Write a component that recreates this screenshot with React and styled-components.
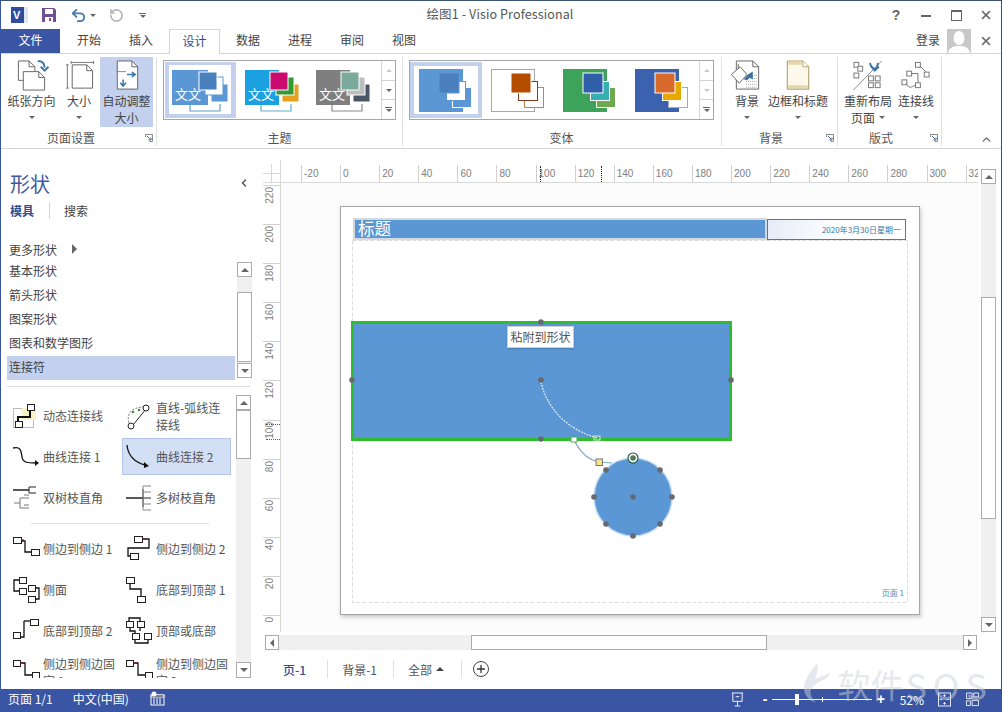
import React from 'react';
import styled, { createGlobalStyle } from 'styled-components';
import { Undo2, RotateCcw, ChevronLeft, ChevronUp, X, Plus } from 'lucide-react';

const BLUE = '#3955a3';
const FONT = '"Noto Sans CJK SC", "Liberation Sans", sans-serif';

const Global = createGlobalStyle`
  html, body { margin: 0; padding: 0; background: #fff; overflow: hidden; }
  * { box-sizing: border-box; }
  #root { width: 1002px; height: 712px; }
`;

const Frame = styled.div`
  position: relative; width: 1002px; height: 712px; display: flex; flex-direction: column;
  border-left: 1px solid ${BLUE}; border-right: 1px solid #34527c; border-top: 1px solid #3d5470;
  font: 12px/17px ${FONT}; color: #444; background: #fff; overflow: hidden;
`;

/* title bar */
const TitleBar = styled.header`
  height: 28px; display: grid; grid-template-columns: 1fr auto 1fr; align-items: center; flex: none;
`;
const Qat = styled.div`display: flex; align-items: center; padding-left: 10px;`;
const QatSlot = styled.span`display: flex; align-items: center; margin-left: ${p => p.$ml || 0}px;`;
const VisioBadge = styled.span`
  position: relative; width: 17px; height: 16px; background: #2f4d9c; color: #fff;
  font: bold 11px/16px "Liberation Sans", sans-serif; padding-left: 2px; display: block;
  border-right: 4px solid #dfe6f3;
`;
const DocTitle = styled.div`font-size: 12.5px; color: #555; letter-spacing: .12px; padding: 0 2px 4px 0;`;
const WinButtons = styled.div`display: flex; justify-content: flex-end; align-items: center; color: #666;`;
const WinBtn = styled.span`width: 30px; height: 22px; display: flex; align-items: center; justify-content: center; font: bold 14px "Liberation Sans", sans-serif;`;

/* tabs */
const TabRow = styled.nav`
  height: 25px; flex: none; display: flex; align-items: stretch; border-bottom: 1px solid #d4d4d4;
`;
const FileTab = styled.div`
  width: 59px; height: 24px; margin-right: 3px; background: ${BLUE}; color: #fff; padding-bottom: 4px;
  display: flex; align-items: center; justify-content: center;
`;
const Tab = styled.div`
  width: ${p => (p.$active ? 51 : 52)}px; height: ${p => (p.$active ? 25 : 24)}px; margin: 0 ${p => (p.$active ? 2 : 0)}px;
  display: flex; align-items: center; justify-content: center; color: ${p => (p.$active ? BLUE : '#444')}; padding-bottom: 4px;
  background: #fff; ${p => p.$active && 'border: 1px solid #d4d4d4; border-bottom: 0; color: #2f4d8f;'}
`;
const SignIn = styled.div`margin-left: auto; display: flex; align-items: center; color: #444;`;
const SignText = styled.span`padding-bottom: 4px;`;
const Avatar = styled.span`width: 24px; height: 24px; margin-left: 7px; background: #c8c8c8; display: block; overflow: hidden;`;
const RibbonClose = styled.span`width: 30px; display: flex; justify-content: center; color: #666;`;

/* ribbon */
const Ribbon = styled.section`
  height: 95px; flex: none; display: flex; padding-top: 3px; border-bottom: 1px solid #d4d4d4; position: relative;
`;
const Group = styled.div`
  width: ${p => p.$w}px; height: 89px; display: flex; flex-direction: column; border-right: 1px solid #e1e1e1; flex: none;
`;
const GroupBody = styled.div`flex: 1; display: flex; padding: ${p => p.$pad || '0 0 0 4px'};`;
const GroupFooter = styled.div`
  height: 17px; display: grid; grid-template-columns: 1fr auto 1fr; align-items: center; color: #555; padding-right: 3px;
`;
const FooterLabel = styled.span`margin: 0 ${p => p.$mr || 0}px 0 ${p => p.$ml || 0}px;`;
const Launcher = styled.svg`justify-self: end; width: 8px; height: 8px;`;
const RibbonBtn = styled.div`
  width: ${p => p.$w}px; height: 70px; padding-top: 3px; display: flex; flex-direction: column; align-items: center;
  background: ${p => (p.$on ? '#c3d0ee' : 'transparent')}; white-space: nowrap; flex: none;
`;
const BtnIcon = styled.svg`width: 36px; height: 32px; flex: none;`;
const BtnLine = styled.div`height: 17px; display: flex; align-items: center; gap: 4px;`;
const Caret = styled.i`
  display: block; width: 0; height: 0; border-left: 3px solid transparent; border-right: 3px solid transparent;
  border-top: 3px solid #666;
`;
const Gallery = styled.div`
  height: 60px; margin-top: 3px; border: 1px solid #a6a6a6; display: flex; width: ${p => p.$w}px;
`;
const GalleryItems = styled.div`flex: 1; display: flex; padding: 1px 0 1px ${p => p.$pl || 0}px;`;
const GalleryCell = styled.div`
  width: ${p => p.$w}px; height: 56px; background: ${p => (p.$on ? '#c3d0ee' : 'transparent')}; flex: none;
`;
const GallerySvg = styled.svg`display: block;`;
const GalleryScroll = styled.div`
  width: 14px; margin-left: auto; border-left: 1px solid #d4d4d4; display: flex; flex-direction: column; flex: none;
`;
const GalleryBtn = styled.div`
  flex: 1; display: flex; align-items: center; justify-content: center; border-bottom: ${p => (p.$last ? 0 : '1px solid #d4d4d4')};
`;
const Tri = styled.i`
  display: block; width: 0; height: 0;
  ${p => p.$dir === 'up' && `border-left:${p.$s || 4}px solid transparent;border-right:${p.$s || 4}px solid transparent;border-bottom:${p.$s || 4}px solid ${p.$c || '#666'};`}
  ${p => p.$dir === 'down' && `border-left:${p.$s || 4}px solid transparent;border-right:${p.$s || 4}px solid transparent;border-top:${p.$s || 4}px solid ${p.$c || '#666'};`}
  ${p => p.$dir === 'left' && `border-top:${p.$s || 4}px solid transparent;border-bottom:${p.$s || 4}px solid transparent;border-right:${p.$s || 4}px solid ${p.$c || '#666'};`}
  ${p => p.$dir === 'right' && `border-top:${p.$s || 4}px solid transparent;border-bottom:${p.$s || 4}px solid transparent;border-left:${p.$s || 4}px solid ${p.$c || '#666'};`}
`;
const MoreIcon = styled.span`
  display: flex; flex-direction: column; align-items: center; gap: 1px;
  &::before { content: ''; width: 7px; height: 1px; background: #666; }
`;
const Collapse = styled.span`position: absolute; right: 8px; bottom: 2px; color: #666; display: flex;`;

/* main */
const Main = styled.main`flex: 1; display: flex; min-height: 0;`;
const Sidebar = styled.aside`width: 249px; flex: none; display: flex; flex-direction: column; padding-top: 21px;`;
const SideHead = styled.div`display: flex; justify-content: space-between; align-items: center; padding: 0 0 0 9px; height: 28px;`;
const SideTitle = styled.h2`margin: 0; font: 400 20px/28px ${FONT}; color: #3f5a9e;`;
const SideChevron = styled.span`display: flex; margin-top: -3px; color: #555;`;
const SideTabs = styled.div`display: flex; align-items: center; height: 18px; margin: 3px 0 0 9px;`;
const SideTab = styled.span`color: ${p => (p.$on ? '#2f4d8f' : '#444')}; font-weight: ${p => (p.$on ? 700 : 400)};`;
const SideDiv = styled.i`width: 1px; height: 17px; background: #d4d4d4; margin: 0 14px 0 15px;`;
const More = styled.div`display: flex; align-items: center; height: 18px; margin: 21px 0 2px 8px; gap: 15px;`;
const ListWrap = styled.div`display: flex; height: 120px; margin-left: 6px;`;
const List = styled.div`width: 228px; flex: none;`;
const ListRow = styled.div`height: 24px; line-height: 22px; padding-left: 2px; background: ${p => (p.$on ? '#c3d0ee' : 'transparent')};`;
const VBar = styled.div`
  width: 15px; display: flex; flex-direction: column; margin: ${p => p.$m || 0}; flex: none; background: #f0f0f0;
`;
const ArrowBtn = styled.div`
  flex: none; width: ${p => p.$w || 15}px; height: ${p => p.$h || 15}px; border: 1px solid #ababab; background: #fff;
  display: flex; align-items: center; justify-content: center;
`;
const Thumb = styled.div`
  flex: none; ${p => p.$h ? `height:${p.$h}px;width:100%;margin-top:${p.$top}px;` : `width:${p.$w}px;height:100%;margin-left:${p.$left}px;`}
  background: #fff; border: 1px solid #ababab;
`;
const Grow = styled.div`flex: 1;`;
const StencilSection = styled.div`
  margin: 6px 0 0 6px; border-top: 1px solid #dcdcdc; display: flex; flex: none; height: 292px; padding-top: 8px;
`;
const StencilGrid = styled.div`
  width: 230px; height: 283px; overflow: hidden; display: grid; grid-template-columns: 111px 109px;
  grid-template-rows: 37px 37px 37px 6px 37px 37px 37px 37px;
  column-gap: 2px; row-gap: 4px; padding: 2px 0 0 2px; align-content: start; flex: none;
`;
const StencilItem = styled.div`
  display: flex; align-items: center; background: ${p => (p.$on ? '#d3dff5' : 'transparent')};
  border: ${p => (p.$on ? '1px solid #b4c6e7' : '1px solid transparent')}; color: #555; min-width: 0;
`;
const StencilIcon = styled.svg`width: 28px; height: 28px; flex: none; margin: 0 3px 0 2px;`;
const StencilDivider = styled.div`
  grid-column: 1 / -1; height: 6px; display: flex; align-items: center; padding: 0 22px;
  &::before { content: ''; flex: 1; height: 1px; background: #dedede; }
`;

/* workspace */
const WorkArea = styled.div`flex: 1; display: flex; flex-direction: column; min-width: 0;`;
const Workspace = styled.div`height: 483px; display: flex; flex: none;`;
const WorkMain = styled.div`width: 715px; margin-left: 13px; padding-top: 11px; display: flex; flex-direction: column; flex: none;`;
const RulerRow = styled.div`height: 23px; display: flex; flex: none;`;
const RulerCorner = styled.div`
  width: 18px; flex: none; position: relative; border-right: 1px solid #d8d8d8; border-bottom: 1px solid #d8d8d8;
  &::before { content: ''; position: absolute; left: 8px; top: 4px; bottom: 0; width: 1px; background: #d8d8d8; }
  &::after { content: ''; position: absolute; left: 0; right: 0; top: 13px; height: 1px; background: #d8d8d8; }
`;
const HRuler = styled.div`
  flex: 1; position: relative; display: flex; overflow: hidden; padding: 5px 0 0 20px; border-bottom: 1px solid #d8d8d8;
`;
const HTick = styled.div`
  width: 39.1px; flex: none; border-left: 1px solid #d0d0d0; padding-left: 2px; font: 10px/17px "Liberation Sans", sans-serif; color: #808080;
`;
const RulerMark = styled.i`
  position: absolute; left: ${p => p.$x}px; top: 6px; height: 16px; border-left: 1px dotted #222;
`;
const BodyRow = styled.div`flex: 1; display: flex; min-height: 0;`;
const VRuler = styled.div`
  width: 18px; flex: none; position: relative; border-right: 1px solid #d8d8d8; padding-top: 2px; display: flex; flex-direction: column; overflow: hidden;
`;
const VTick = styled.div`
  height: 39.1px; flex: none; border-top: 1px solid #d0d0d0; display: flex; justify-content: center; align-items: flex-start; padding-right: 3px;
  font: 10px/12px "Liberation Sans", sans-serif; color: #808080;
`;
const VLabel = styled.span`writing-mode: vertical-rl; transform: rotate(180deg); margin-top: 1px;`;
const VRulerMark = styled.i`
  position: absolute; left: 3px; top: ${p => p.$y}px; width: 14px; border-top: 1px dotted #555;
`;
const Canvas = styled.div`flex: 1; position: relative; background: #fcfcfc; overflow: hidden;`;
const Page = styled.div`
  position: absolute; left: 59px; top: 23px; width: 580px; height: 409px; background: #fff;
  border: 1px solid #a6a6a6; box-shadow: 1px 2px 4px rgba(0,0,0,.22);
`;
const Diagram = styled.svg`position: absolute; left: 0; top: 0; width: 578px; height: 407px;`;
const Band = styled.div`
  position: absolute; left: 12px; top: 11px; width: 414px; height: 22px; border: 2px solid #d2d9df; background: #5b97d4;
  color: #fff; font: 16.5px/17px ${FONT}; padding-left: 3px; overflow: hidden; white-space: nowrap;
`;
const DateBox = styled.div`
  position: absolute; left: 426px; top: 12px; width: 139px; height: 21px; border: 1px solid #4f7c92;
  background: linear-gradient(90deg, #e6edf8, #fff 55%); color: #2f7aa8; font: 8px/19px ${FONT}; text-align: right; padding-right: 4px; white-space: nowrap;
`;
const PageNum = styled.div`position: absolute; right: 15px; top: 380px; font: 8px/12px ${FONT}; color: #4a90c0;`;
const Hint = styled.div`
  position: absolute; left: 166px; top: 119px; width: 67px; height: 22px; background: #fff; border: 1px solid #cfcfcf;
  color: #555; text-align: center; line-height: 19px; box-shadow: 0 1px 2px rgba(0,0,0,.18); white-space: nowrap;
`;
const HBar = styled.div`
  height: 15px; margin: 3px 24px 0 15px; display: flex; background: #f0f0f0; flex: none;
`;
const HTrack = styled.div`flex: 1; height: 100%;`;
const PageTabs = styled.div`flex: 1; display: flex; align-items: center; padding: 0 0 0 33px; margin-top: -1px;`;
const PageTab = styled.span`color: ${p => (p.$on ? '#2f4d8f' : '#555')}; font-weight: ${p => (p.$on ? 500 : 400)}; display: flex; align-items: center; gap: 4px;`;
const PageSep = styled.i`width: 1px; height: 18px; background: #e0e0e0; margin: 0 ${p => p.$r || 14}px 0 ${p => p.$l || 21}px;`;
const AddPage = styled.span`
  width: 16px; height: 16px; border: 1px solid #444; border-radius: 50%; display: flex; align-items: center; justify-content: center; margin-left: 2px;
`;

/* status */
const Status = styled.footer`
  height: 23px; flex: none; background: ${BLUE}; color: #fff; display: flex; align-items: center; padding: 0 0 5px 7px; position: relative;
`;
const StatusItem = styled.span`margin: 0 ${p => p.$mr || 0}px 0 ${p => p.$ml || 0}px; display: flex; align-items: center;`;
const StatusRight = styled.div`margin-left: auto; display: flex; align-items: center; padding-right: 22px; margin-top: 2px;`;
const Zoomer = styled.div`position: relative; width: 100px; height: 1px; background: #fff; margin: 0 5px 0 4px;`;
const ZoomThumb = styled.i`position: absolute; left: 23px; top: -5px; width: 4px; height: 11px; background: #fff;`;
const ZoomTick = styled.i`position: absolute; left: 50px; top: -2px; width: 1px; height: 5px; background: #fff;`;
const ZoomSign = styled.span`font: bold 14px/14px "Liberation Sans", sans-serif; color: #fff; width: ${p => p.$w}px; text-align: center;`;
const Watermark = styled.div`
  position: absolute; right: 8px; bottom: 5px; display: flex; align-items: center; gap: 2px; pointer-events: none;
  color: rgba(205,210,220,.5); font: 400 33px/46px ${FONT};
`;
const WatermarkLatin = styled.span`font-size: 36px; letter-spacing: 6px;`;

/* drawings */
const Doc = ({ x, y, w, h, f = 6, fill = '#fff', stroke = '#666' }) => (
  <g>
    <path d={`M${x} ${y}H${x + w - f}L${x + w} ${y + f}V${y + h}H${x}Z`} fill={fill} stroke={stroke} />
    <path d={`M${x + w - f} ${y}V${y + f}H${x + w}`} fill="none" stroke={stroke} />
  </g>
);
const Launch = () => (
  <Launcher viewBox="0 0 8 8">
    <path d="M.5 3V.5H7.5V7.5H4.5" fill="none" stroke="#8a8a8a" />
    <path d="M2 2L6 6M6 3.5V6H3.5" fill="none" stroke="#4a6a9a" />
  </Launcher>
);
const IOrient = () => (
  <BtnIcon viewBox="0 0 36 33">
    <Doc x={4} y={1} w={17} h={20} />
    <Doc x={9} y={12} w={22} h={19} />
    <path d="M24 1c5 0 7 2 7 7" fill="none" stroke="#3a77a8" strokeWidth="2" />
    <path d="M27 7l4 4 4-4" fill="none" stroke="#3a77a8" strokeWidth="2" />
  </BtnIcon>
);
const ISize = () => (
  <BtnIcon viewBox="0 0 36 33">
    <Doc x={11} y={5} w={21} h={24} />
    <path d="M10 2.5H33M10 1V4M33 1V4M6 5V29M4.5 5H7.5M4.5 29H7.5" fill="none" stroke="#777" />
  </BtnIcon>
);
const IAuto = () => (
  <BtnIcon viewBox="0 0 36 33">
    <Doc x={8} y={1} w={21} h={29} />
    <path d="M18 15H26M23 12.5L26.5 15L23 17.5" fill="none" stroke="#3a77a8" strokeWidth="1.6" />
    <path d="M14 20V26M11 23.5L14 27L17 23.5" fill="none" stroke="#3a77a8" strokeWidth="1.6" />
    <path d="M7 12H17" stroke="#888" />
  </BtnIcon>
);
const IBg = () => (
  <BtnIcon viewBox="0 0 36 33">
    <Doc x={7} y={1} w={23} h={29} />
    <path d="M13 16h16M13 19h16M17 22h12M17 25h12M17 28h12" stroke="#999" strokeDasharray="1 1" />
    <path d="M2 15L11 7L18 15L10 24Z" fill="#fff" stroke="#666" />
    <path d="M9 9V4" stroke="#666" />
    <path d="M15 20c4-6 7-7 9-8v8l-3-2-3 3z" fill="#3a6ea5" />
  </BtnIcon>
);
const IFrame = () => (
  <BtnIcon viewBox="0 0 36 33">
    <path d="M7 1H23L29 7V30H7Z" fill="#fdf9ea" stroke="#b7a47a" strokeWidth="1.2" />
    <path d="M8 2H22V5H8ZM8 26H28V29H8Z" fill="#e6d7a8" />
    <path d="M23 1V7H29" fill="#fff" stroke="#b7a47a" />
  </BtnIcon>
);
const ILayout = () => (
  <BtnIcon viewBox="0 0 36 33">
    <g fill="#fff" stroke="#777">
      <rect x="3.5" y="2.5" width="5" height="5" /><rect x="7.5" y="6.5" width="5" height="5" />
      <rect x="3.5" y="13.5" width="5" height="5" />
      <rect x="18.5" y="16.5" width="5" height="5" /><rect x="25.5" y="16.5" width="5" height="5" />
      <rect x="18.5" y="23.5" width="5" height="5" /><rect x="25.5" y="23.5" width="5" height="5" />
    </g>
    <path d="M3 31L32 1" stroke="#888" />
    <path d="M20 3c1 4 3 6 5 6s3-3 3-6" fill="none" stroke="#3a77a8" strokeWidth="2" />
    <path d="M21 6l4 5 4-4" fill="none" stroke="#3a77a8" strokeWidth="2" />
  </BtnIcon>
);
const IConn = () => (
  <BtnIcon viewBox="0 0 36 33">
    <g fill="#fff" stroke="#777">
      <rect x="17.5" y="2.5" width="5" height="5" /><rect x="8.5" y="11.5" width="5" height="5" />
      <rect x="26.5" y="12.5" width="5" height="5" /><rect x="3.5" y="20.5" width="5" height="5" />
      <rect x="17.5" y="23.5" width="5" height="5" />
    </g>
    <path d="M22 6L28 12M13 14H20V23M8 24c2 6 6 4 9 2" fill="none" stroke="#777" />
  </BtnIcon>
);

const themeItems = [
  { x: 7, main: '#5b97d4', a: '#4a80bd', b: '#fff', bS: '#5b97d4', c: '#5b97d4', line: '#5f9ed1' },
  { x: 9, main: '#1ba1e2', a: '#c90c6e', b: '#339933', bS: '#fff', c: '#e8a020', line: '#5fb0d0' },
  { x: 9, main: '#7f7f7f', a: '#7ba99b', b: '#bdbdbd', bS: '#fff', c: '#4a5568', line: '#8a8a8a' },
];
const ThemeThumb = ({ d, on }) => (
  <GalleryCell $w={71} $on={on}>
    <GallerySvg width="71" height="56" viewBox="0 0 71 56">
      {on && <rect x="4" y="3" width="62" height="49" fill="#fff" />}
      <rect x={d.x} y="8" width={43 - d.x} height="35" fill={d.main} />
      <path d="M25 43V49H55V42" fill="none" stroke={d.line} strokeWidth="1.2" />
      <rect x="46" y="22" width="17" height="18" fill={d.c} stroke="#fff" />
      <rect x="40" y="15" width="18" height="18" fill={d.b} stroke={d.bS} />
      <rect x="34" y="10" width="18" height="18" fill={d.a} stroke="#fff" />
      <text x={d.x + 3} y="37" fontSize="13" fill="#fff" fontFamily={FONT}>文文</text>
    </GallerySvg>
  </GalleryCell>
);
const variants = [
  { main: '#5b97d4', mS: '#5b97d4', a: '#4a80bd', aS: '#5b97d4', b: '#fff', bS: '#5b97d4', c: '#5b97d4', cS: '#fff', bgOn: true },
  { main: '#fff', mS: '#a8a8a8', a: '#b54d00', aS: '#fff', b: '#fff', bS: '#8a3a20', c: '#fff', cS: '#b08a50' },
  { main: '#3da35a', mS: '#3da35a', a: '#2f5fa8', aS: '#fff', b: '#35b0b0', bS: '#fff', c: '#70a850', cS: '#fff' },
  { main: '#3a62ae', mS: '#3a62ae', a: '#d86a2c', aS: '#fff', b: '#e8a800', bS: '#fff', c: '#fff', cS: '#aaa' },
];
const VariantThumb = ({ d }) => (
  <GalleryCell $w={72} $on={d.bgOn}>
    <GallerySvg width="72" height="56" viewBox="0 1 72 56">
      {d.bgOn && <rect x="4" y="5" width="64" height="48" fill="#fff" />}
      <rect x="9.5" y="8.5" width="43" height="42" fill={d.main} stroke={d.mS} />
      <rect x="42.5" y="26.5" width="19" height="20" fill={d.c} stroke={d.cS} />
      <rect x="36.5" y="20.5" width="19" height="19" fill={d.b} stroke={d.bS} />
      <rect x="29" y="12" width="20" height="20" fill={d.a} stroke={d.aS} />
    </GallerySvg>
  </GalleryCell>
);

const B = ({ x, y, w = 7, h = 6 }) => <rect x={x + .5} y={y + .5} width={w} height={h} fill="#fff" stroke="#222" />;
const R = ({ d }) => <path d={d} fill="none" stroke="#8a1c2a" strokeWidth="1.2" />;
const K = ({ d, w = 1.3 }) => <path d={d} fill="none" stroke="#111" strokeWidth={w} />;

const stencilIcons = {
  dyn: <>
    <rect x="1.5" y="6.5" width="20" height="19" fill="none" stroke="#777" strokeDasharray="1 1" />
    <rect x="10" y="6" width="14" height="12" fill="#fbf3c8" />
    <K d="M6 20V15H18V8" w={2} />
    <B x={15} y={2} /><B x={3} y={19} />
  </>,
  arc: <>
    <path d="M5 24C0 12 6 5 20 5" fill="none" stroke="#777" strokeDasharray="2 1.5" />
    <path d="M8 23L21 7" stroke="#222" />
    <circle cx="21" cy="6" r="3" fill="#fff" stroke="#222" />
    <circle cx="6" cy="24" r="3" fill="#fff" stroke="#222" />
    <circle cx="8" cy="10" r="1.3" fill="#4a8a3a" /><circle cx="14" cy="8" r="1.3" fill="#4a8a3a" />
  </>,
  c1: <><K d="M1 5C9 3 9 8 10 14C11 20 16 20 24 20" /><path d="M23 17L27 20L23 23Z" fill="#111" /></>,
  c2: <><K d="M2 2C3 12 9 19 20 22" /><path d="M19 19L24 23L19 25Z" fill="#111" /></>,
  t2: <>
    <K d="M1 6H17" w={1.4} /><path d="M24 3H17V9H24" fill="none" stroke="#222" />
    <g stroke="#777" fill="none"><path d="M2 19H8M8 14V24M8 14H12M8 24H12M12 11H17M12 14H17M12 21H17M12 24H17" /></g>
  </>,
  tm: <>
    <K d="M1 14H18" w={1.4} /><path d="M18 5V23M18 14H26" stroke="#222" fill="none" />
    <path d="M18 2H26M18 8H26M18 20H26M18 26H26M18 2V26" stroke="#888" fill="none" />
  </>,
  s1: <><B x={1} y={2} w={8} /><K d="M9 6H13V17H20" /><R d="M9 5H12" /><B x={19} y={14} w={8} /></>,
  s2: <><B x={9} y={1} w={8} /><K d="M17 4H24V13H3V21H5" /><R d="M17 4H20" /><B x={5} y={18} w={8} /></>,
  side: <>
    <B x={7} y={1} /><B x={7} y={12} /><K d="M7 4H2V15H7" /><B x={16} y={9} /><B x={16} y={20} /><K d="M23 12H27V23H23" />
  </>,
  b1: <><B x={1} y={1} w={8} /><K d="M5 7V13H16V20" /><B x={12} y={20} w={8} /></>,
  b2: <><K d="M12 4V20H6" /><K d="M12 4H19" /><B x={18} y={2} w={8} /><B x={1} y={15} w={7} /></>,
  tb: <>
    <B x={1} y={4} /><B x={12} y={4} /><K d="M4 4V1H15V4" /><B x={7} y={16} /><B x={19} y={16} /><K d="M5 11V14H10V16M15 11V14M10 23V26H23V23" />
  </>,
  f1: <><B x={1} y={2} w={7} /><K d="M8 5H13V17H20" /><R d="M8 5H12" /><B x={20} y={14} w={7} /></>,
  f2: <><B x={1} y={2} w={7} /><K d="M8 5H13V17H20" /><R d="M8 5H12" /><B x={20} y={14} w={7} /></>,
};

const stencilRows = [
  [['dyn', '动态连接线'], ['arc', '直线-弧线连接线']],
  [['c1', '曲线连接 1'], ['c2', '曲线连接 2', true]],
  [['t2', '双树枝直角'], ['tm', '多树枝直角']],
  'div',
  [['s1', '侧边到侧边 1'], ['s2', '侧边到侧边 2']],
  [['side', '侧面'], ['b1', '底部到顶部 1']],
  [['b2', '底部到顶部 2'], ['tb', '顶部或底部']],
  [['f1', '侧边到侧边固定 1'], ['f2', '侧边到侧边固定 2']],
];

const dots = [[352, 380], [541, 322], [731, 380], [541, 439], [541, 380], [606, 470], [660, 470], [594, 497], [672, 497], [606, 524], [660, 524], [633, 536], [633, 497]];
const hTicks = Array.from({ length: 18 }, (_, i) => -20 + i * 20);
const vTicks = Array.from({ length: 12 }, (_, i) => 220 - i * 20);

export default function App() {
  return (
    <Frame>
      <Global />
      <TitleBar>
        <Qat>
          <QatSlot><VisioBadge>V</VisioBadge></QatSlot>
          <QatSlot $ml={13}>
            <svg width="16" height="16" viewBox="0 0 16 16">
              <path d="M1 1H13L15 3V15H1Z" fill="#6f4f95" />
              <rect x="4" y="2" width="8" height="5" fill="#fff" />
              <rect x="4" y="10" width="8" height="5" fill="#fff" />
              <rect x="8" y="11" width="2" height="3" fill="#6f4f95" />
            </svg>
          </QatSlot>
          <QatSlot $ml={13}><Undo2 size={17} color="#4479ad" strokeWidth={2.6} /></QatSlot>
          <QatSlot $ml={3}><Caret /></QatSlot>
          <QatSlot $ml={13}><RotateCcw size={15} color="#b5b5b5" strokeWidth={2.6} /></QatSlot>
          <QatSlot $ml={15}><MoreIcon><Caret /></MoreIcon></QatSlot>
        </Qat>
        <DocTitle>绘图1 - Visio Professional</DocTitle>
        <WinButtons>
          <WinBtn>?</WinBtn>
          <WinBtn><svg width="11" height="3"><rect width="10" height="2" y="1" fill="#666" /></svg></WinBtn>
          <WinBtn><svg width="11" height="11"><rect x=".5" y=".5" width="10" height="10" fill="none" stroke="#666" /><rect width="11" height="2" fill="#666" /></svg></WinBtn>
          <WinBtn><X size={14} color="#666" strokeWidth={2.8} /></WinBtn>
        </WinButtons>
      </TitleBar>
      <TabRow>
        <FileTab>文件</FileTab>
        <Tab>开始</Tab>
        <Tab>插入</Tab>
        <Tab $active>设计</Tab>
        <Tab>数据</Tab>
        <Tab>进程</Tab>
        <Tab>审阅</Tab>
        <Tab>视图</Tab>
        <SignIn>
          <SignText>登录</SignText>
          <Avatar>
            <svg width="24" height="24" viewBox="0 0 24 24">
              <ellipse cx="12" cy="9" rx="5.5" ry="7" fill="#fff" />
              <path d="M1 24C2 18 7 17 12 17S22 18 23 24Z" fill="#fff" />
            </svg>
          </Avatar>
          <RibbonClose><X size={14} color="#666" strokeWidth={2.8} /></RibbonClose>
        </SignIn>
      </TabRow>
      <Ribbon>
        <Group $w={156}>
          <GroupBody $pad="0 0 0 4px">
            <RibbonBtn $w={53}><IOrient /><BtnLine>纸张方向</BtnLine><BtnLine><Caret /></BtnLine></RibbonBtn>
            <RibbonBtn $w={42}><ISize /><BtnLine>大小</BtnLine><BtnLine><Caret /></BtnLine></RibbonBtn>
            <RibbonBtn $w={53} $on><IAuto /><BtnLine>自动调整</BtnLine><BtnLine>大小</BtnLine></RibbonBtn>
          </GroupBody>
          <GroupFooter><span /><FooterLabel $mr={12}>页面设置</FooterLabel><Launch /></GroupFooter>
        </Group>
        <Group $w={246}>
          <GroupBody $pad="0 0 0 6px">
            <Gallery $w={233}>
              <GalleryItems $pl={1}>
                {themeItems.map((d, i) => <ThemeThumb key={i} d={d} on={i === 0} />)}
              </GalleryItems>
              <GalleryScroll>
                <GalleryBtn><Tri $dir="up" $s={3} $c="#c8c8c8" /></GalleryBtn>
                <GalleryBtn><Tri $dir="down" $s={3} /></GalleryBtn>
                <GalleryBtn $last><MoreIcon><Tri $dir="down" $s={3} /></MoreIcon></GalleryBtn>
              </GalleryScroll>
            </Gallery>
          </GroupBody>
          <GroupFooter><span /><FooterLabel $ml={3}>主题</FooterLabel><span /></GroupFooter>
        </Group>
        <Group $w={319}>
          <GroupBody $pad="0 0 0 6px">
            <Gallery $w={305}>
              <GalleryItems>
                {variants.map((d, i) => <VariantThumb key={i} d={d} />)}
              </GalleryItems>
              <GalleryScroll>
                <GalleryBtn><Tri $dir="up" $s={3} $c="#c8c8c8" /></GalleryBtn>
                <GalleryBtn><Tri $dir="down" $s={3} $c="#c8c8c8" /></GalleryBtn>
                <GalleryBtn $last><MoreIcon><Tri $dir="down" $s={3} /></MoreIcon></GalleryBtn>
              </GalleryScroll>
            </Gallery>
          </GroupBody>
          <GroupFooter><span /><FooterLabel $ml={2}>变体</FooterLabel><span /></GroupFooter>
        </Group>
        <Group $w={116}>
          <GroupBody $pad="0 0 0 7px">
            <RibbonBtn $w={36}><IBg /><BtnLine>背景</BtnLine><BtnLine><Caret /></BtnLine></RibbonBtn>
            <RibbonBtn $w={66}><IFrame /><BtnLine>边框和标题</BtnLine><BtnLine><Caret /></BtnLine></RibbonBtn>
          </GroupBody>
          <GroupFooter><span /><FooterLabel $mr={14}>背景</FooterLabel><Launch /></GroupFooter>
        </Group>
        <Group $w={104}>
          <GroupBody $pad="0 0 0 5px">
            <RibbonBtn $w={50}><ILayout /><BtnLine>重新布局</BtnLine><BtnLine>页面<Caret /></BtnLine></RibbonBtn>
            <RibbonBtn $w={46}><IConn /><BtnLine>连接线</BtnLine><BtnLine><Caret /></BtnLine></RibbonBtn>
          </GroupBody>
          <GroupFooter><span /><FooterLabel $mr={14}>版式</FooterLabel><Launch /></GroupFooter>
        </Group>
        <Collapse><ChevronUp size={13} strokeWidth={2.6} /></Collapse>
      </Ribbon>
      <Main>
        <Sidebar>
          <SideHead>
            <SideTitle>形状</SideTitle>
            <SideChevron><ChevronLeft size={12} strokeWidth={3} /></SideChevron>
          </SideHead>
          <SideTabs>
            <SideTab $on>模具</SideTab>
            <SideDiv />
            <SideTab>搜索</SideTab>
          </SideTabs>
          <More>更多形状<Tri $dir="right" $s={5} /></More>
          <ListWrap>
            <List>
              <ListRow>基本形状</ListRow>
              <ListRow>箭头形状</ListRow>
              <ListRow>图案形状</ListRow>
              <ListRow>图表和数学图形</ListRow>
              <ListRow $on>连接符</ListRow>
            </List>
            <VBar $m="2px 0 2px 2px">
              <ArrowBtn><Tri $dir="up" /></ArrowBtn>
              <Thumb $h={70} $top={15} />
              <Grow />
              <ArrowBtn><Tri $dir="down" /></ArrowBtn>
            </VBar>
          </ListWrap>
          <StencilSection>
            <StencilGrid>
              {stencilRows.map((row, i) => row === 'div'
                ? <StencilDivider key={i} />
                : row.map(([ic, label, on]) => (
                  <StencilItem key={label} $on={on}>
                    <StencilIcon viewBox="0 0 28 28">{stencilIcons[ic]}</StencilIcon>
                    <span>{label}</span>
                  </StencilItem>
                )))}
            </StencilGrid>
            <VBar $m="0 0 0 -1px">
              <ArrowBtn><Tri $dir="up" /></ArrowBtn>
              <Thumb $h={49} $top={0} />
              <Grow />
              <ArrowBtn $h={16}><Tri $dir="down" /></ArrowBtn>
            </VBar>
          </StencilSection>
        </Sidebar>
        <WorkArea>
          <Workspace>
            <WorkMain>
              <RulerRow>
                <RulerCorner />
                <HRuler>
                  {hTicks.map(t => <HTick key={t}>{t}</HTick>)}
                  <RulerMark $x={259} />
                  <RulerMark $x={320} />
                </HRuler>
              </RulerRow>
              <BodyRow>
                <VRuler>
                  {vTicks.map(t => <VTick key={t}><VLabel>{t}</VLabel></VTick>)}
                  <VRulerMark $y={241} />
                  <VRulerMark $y={256} />
                </VRuler>
                <Canvas>
                  <Page>
                    <Diagram viewBox="341 207 578 407">
                      <rect x="352.5" y="240.5" width="555" height="362" fill="none" stroke="#dcdcdc" strokeDasharray="4 2" />
                      <rect x="352.5" y="322.5" width="378" height="117" fill="#5b97d4" stroke="#2fbd2f" strokeWidth="3" />
                      <circle cx="633" cy="497" r="39" fill="#5b97d4" stroke="#c4dcf2" strokeWidth="1.5" />
                      <path d="M541 382C548 412 570 430 597 438" fill="none" stroke="#dfeaf5" strokeWidth="1.2" strokeDasharray="2 1" />
                      <path d="M574 440C580 452 588 460 599 462L612 463" fill="none" stroke="#7ea6c4" strokeWidth="1.2" />
                      <rect x="594" y="436" width="6" height="4" fill="none" stroke="#cfe5d0" />
                      {dots.map(([x, y]) => <circle key={`${x}-${y}`} cx={x} cy={y} r="2.8" fill="#666a70" />)}
                      <rect x="571" y="437" width="6" height="5" fill="#fff" stroke="#4caf50" />
                      <rect x="596" y="459" width="6.5" height="6.5" fill="#fbe58a" stroke="#777" />
                      <circle cx="633" cy="458" r="5" fill="#fff" stroke="#174d2a" strokeWidth="1.1" />
                      <circle cx="633" cy="458" r="2.8" fill="#4d7a5a" />
                    </Diagram>
                    <Band>标题</Band>
                    <DateBox>2020年3月30日星期一</DateBox>
                    <PageNum>页面 1</PageNum>
                    <Hint>粘附到形状</Hint>
                  </Page>
                </Canvas>
              </BodyRow>
            </WorkMain>
            <VBar $m="20px 6px 0 3px">
              <ArrowBtn><Tri $dir="up" /></ArrowBtn>
              <Thumb $h={222} $top={113} />
              <Grow />
              <ArrowBtn><Tri $dir="down" /></ArrowBtn>
            </VBar>
          </Workspace>
          <HBar>
            <ArrowBtn $w={14}><Tri $dir="left" /></ArrowBtn>
            <HTrack>
              <Thumb $w={296} $left={192} />
            </HTrack>
            <ArrowBtn $w={14}><Tri $dir="right" /></ArrowBtn>
          </HBar>
          <PageTabs>
            <PageTab $on>页-1</PageTab>
            <PageSep />
            <PageTab>背景-1</PageTab>
            <PageSep $l={16} />
            <PageTab>全部<Tri $dir="up" $s={4} $c="#444" /></PageTab>
            <PageSep $l={17} $r={9} />
            <AddPage><Plus size={12} color="#333" strokeWidth={2.6} /></AddPage>
          </PageTabs>
        </WorkArea>
      </Main>
      <Status>
        <StatusItem $mr={20}>页面 1/1</StatusItem>
        <StatusItem $mr={21}>中文(中国)</StatusItem>
        <StatusItem>
          <svg width="15" height="15" viewBox="0 0 15 15">
            <rect x="1" y="4" width="13" height="10" fill="none" stroke="#fff" />
            <path d="M1 4H14V6H1ZM3 8h2M6 8h2M9 8h2M3 10h2M6 10h2M9 10h2M3 12h2M6 12h2M9 12h2" stroke="#fff" />
            <circle cx="4" cy="3" r="2.5" fill="#fff" />
          </svg>
        </StatusItem>
        <StatusRight>
          <StatusItem $mr={19}>
            <svg width="13" height="17" viewBox="0 0 14 17" fill="none" stroke="#fff">
              <path d="M1 1.5H13M2 1.5V10.5H12V1.5M7 10.5V15M4 15.5H10M5 5.5H9" />
            </svg>
          </StatusItem>
          <ZoomSign $w={5}>-</ZoomSign>
          <Zoomer><ZoomThumb /><ZoomTick /></Zoomer>
          <ZoomSign $w={7}>+</ZoomSign>
          <StatusItem $ml={16} $mr={14}>52%</StatusItem>
          <StatusItem $mr={15}>
            <svg width="13" height="15" viewBox="0 0 15 16" fill="none" stroke="#fff">
              <rect x=".5" y=".5" width="14" height="15" />
              <path d="M7.5 2V5M6 3.5H9M7.5 11V14M6 12.5H9M2 8H5M10 8H13" />
            </svg>
          </StatusItem>
          <svg width="13" height="15" viewBox="0 0 15 16" fill="none" stroke="#fff">
            <path d="M.5 7V.5H7V7ZM9 .5H14.5V5H9ZM.5 9.5H5V15H.5ZM7 9H14.5V15H7Z" />
          </svg>
        </StatusRight>
      </Status>
      <Watermark>
        <svg width="38" height="46" viewBox="0 0 34 46">
          <path d="M18 3C12 9 6 17 5 26C4 35 12 40 17 42C10 35 10 28 15 24C21 20 30 18 31 11C27 15 20 16 16 18C18 13 20 8 18 3Z" fill="currentColor" />
        </svg>
        软件<WatermarkLatin>SOS</WatermarkLatin>
      </Watermark>
    </Frame>
  );
}
